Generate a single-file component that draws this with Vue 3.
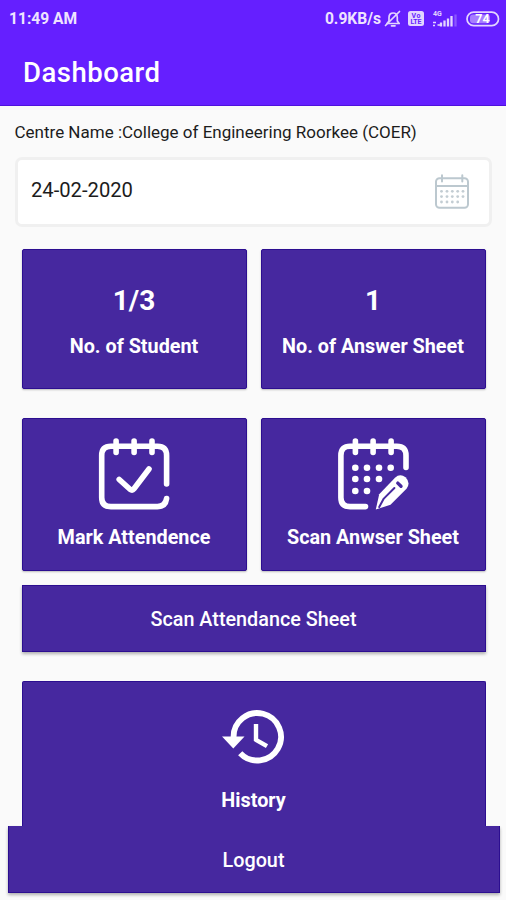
<template>
  <div class="screen">
    <header class="header">
      <div class="status">
        <span class="status__time">11:49 AM</span>
        <span class="status__speed">0.9KB/s</span>
        <svg class="status__bell" width="18" height="18" viewBox="0 0 18 18">
          <path d="M3 13.5 L5 11 V7.5 C5 4.5 7 3 9.2 3 C11.5 3 13.3 4.5 13.3 7.5 V11 L15.2 13.5 Z M7.5 15.8 H11" />
          <path d="M1.5 15.5 L15.5 1.5" />
        </svg>
        <svg class="status__volte" width="16" height="15" viewBox="0 0 16 15">
          <rect width="16" height="15" rx="2.5" />
          <text x="8" y="7" textLength="9">Vo</text>
          <text x="8" y="13.3" textLength="11">LTE</text>
        </svg>
        <svg class="status__signal" width="26" height="18" viewBox="0 0 26 18">
          <text x="1" y="6">4G</text>
          <path d="M1 12.5 h3 M1 15.5 h2 M5.5 15 h2.5" class="faint" />
          <path d="M9 16.5 v-4 M12.5 16.5 v-6 M16 16.5 v-8 M19.5 16.5 v-10.5" />
          <path d="M23.5 16.5 v-12" class="dim" />
        </svg>
        <svg class="status__battery" width="34" height="16" viewBox="0 0 34 16">
          <rect x="1" y="1.2" width="31.5" height="13.4" rx="6.7" />
          <rect x="4" y="3.5" width="20" height="8.8" rx="3" class="level" />
          <text x="16.5" y="12.4">74</text>
        </svg>
      </div>
      <h1 class="title">Dashboard</h1>
    </header>

    <p class="centre">Centre Name :College of Engineering Roorkee (COER)</p>

    <div class="date">
      <span>{{ date }}</span>
      <svg width="36" height="36" viewBox="0 0 36 36">
        <rect x="2" y="4.2" width="32" height="29.5" rx="3.5" />
        <path d="M2 12 H34 M8 1.2 V7.5 M28.3 1.2 V7.5" />
        <g class="dots">
          <circle v-for="dot in dateDots" :key="dot.id" :cx="dot.x" :cy="dot.y" r="1.4" />
        </g>
      </svg>
    </div>

    <main class="grid">
      <div v-for="item in counts" :key="item.label" class="card card--count">
        <strong class="card__value">{{ item.value }}</strong>
        <span class="card__label">{{ item.label }}</span>
      </div>

      <button class="card card--action">
        <svg width="72" height="74" viewBox="0 0 72 74">
          <path d="M68.6 46 V17.5 Q68.6 8.3 59.4 8.3 H12.9 Q3.7 8.3 3.7 17.5 V59.4 Q3.7 68.6 12.9 68.6 H59.4 Q67.5 68.6 68.6 60.5" />
          <path d="M18.1 3 V14.5 M36.1 3 V14.5 M54 3 V14.5" />
          <path d="M21.2 41.5 L32 51.3 Q34.3 53 36 50.8 L51 31" />
        </svg>
        <span class="card__label">Mark Attendence</span>
      </button>

      <button class="card card--action">
        <svg width="72" height="74" viewBox="0 0 72 74">
          <path d="M69 29.5 V17.5 Q69 8.3 59.8 8.3 H13.1 Q3.9 8.3 3.9 17.5 V59.4 Q3.9 68.6 13.1 68.6 H28.5" />
          <path d="M18.4 3 V14.5 M36.1 3 V14.5 M54.1 3 V14.5" />
          <g class="solid">
            <circle v-for="dot in sheetDots" :key="dot.id" :cx="dot.x" :cy="dot.y" r="3.3" />
            <path d="M38.8 71.5 L42.2 56.2 L58 39.8 Q63 35.2 68.5 39.3 Q74 44.7 69.5 50.8 L53.5 66.7 Z" />
          </g>
          <path class="cut" d="M42.2 69 L46.8 60.6 L57.4 50" />
          <path class="cut cut--ring" d="M60.8 45.1 L64 48.2" />
        </svg>
        <span class="card__label">Scan Anwser Sheet</span>
      </button>

      <button class="card card--wide">Scan Attendance Sheet</button>

      <button class="card card--history">
        <svg width="64" height="56" viewBox="0 0 64 56">
          <path d="M11.6 29.5 A23.7 23.7 0 1 1 18.2 45.2" />
          <path d="M0 28.5 H22.5 L11.3 40.5 Z" class="head" />
          <path d="M34 16 V31.8 L45 38.2" class="hands" />
        </svg>
        <span class="card__label">History</span>
      </button>
    </main>

    <button class="logout">Logout</button>
  </div>
</template>

<script setup>
import { ref } from 'vue';

const date = ref('24-02-2020');

const counts = [
  { value: '1/3', label: 'No. of Student' },
  { value: '1', label: 'No. of Answer Sheet' }
];

const makeDots = (rows, xs, ys) =>
  rows.flatMap((count, row) =>
    xs.slice(0, count).map((x, col) => ({ id: `${row}-${col}`, x, y: ys[row] }))
  );

const sheetDots = makeDots([4, 3, 2], [18.3, 30, 42, 53.7], [29.7, 41, 53]);
const dateDots = makeDots([5, 5, 4], [7.5, 13, 18.3, 23.7, 29], [17.3, 22.6, 28]);
</script>

<style>
body {
  margin: 0;
  background: #fafafa;
}
</style>

<style scoped>
.screen {
  box-sizing: border-box;
  width: 506px;
  height: 900px;
  overflow: hidden;
  background: #fafafa;
  font-family: Roboto, sans-serif;
}

svg {
  display: block;
  flex: none;
  fill: none;
  stroke-linecap: round;
  stroke-linejoin: round;
}

.header {
  box-sizing: border-box;
  height: 106px;
  background: #651fff;
  border-bottom: 1px solid #4f12dc;
  color: #fff;
}

.status {
  display: flex;
  align-items: center;
  height: 38px;
  padding: 0 6px 0 9px;
  color: #eee3ff;
  font-size: 15.6px;
  font-weight: 700;
}

.status svg {
  margin-bottom: 1px;
  stroke: #e3d4ff;
}

.status text {
  fill: #e3d4ff;
  stroke: none;
  font-weight: 700;
}

.status__speed {
  margin-left: auto;
}

.status__bell {
  margin-left: 3px;
  stroke-width: 1.7;
}

.status__volte {
  margin-left: 6px;
}

.status__volte rect {
  fill: #e3d4ff;
  stroke: none;
}

.status .status__volte text {
  fill: #651fff;
  font-size: 7px;
  text-anchor: middle;
}

.status__signal {
  margin-left: 8px;
  stroke-width: 2.3;
  stroke-linecap: butt;
}

.status__signal text {
  font-size: 7px;
}

.status__signal .faint {
  stroke-width: 1.5;
}

.status__signal .dim {
  opacity: 0.3;
}

.status__battery {
  margin-left: 8px;
  stroke-width: 1.7;
}

.status__battery .level {
  fill: #a77dff;
  stroke: none;
}

.status .status__battery text {
  fill: #fff;
  font-size: 12.5px;
  text-anchor: middle;
}

.title {
  margin: 0;
  padding: 18px 0 0 23px;
  font-size: 27.5px;
  font-weight: 500;
  line-height: 34px;
  letter-spacing: 0.5px;
}

.centre {
  margin: 0;
  padding: 16px 0 0 14.5px;
  color: #1c1c1c;
  font-size: 17px;
  line-height: 21px;
  white-space: nowrap;
}

.date {
  box-sizing: border-box;
  display: flex;
  align-items: center;
  justify-content: space-between;
  width: 477px;
  height: 70px;
  margin: 14px 0 0 15px;
  padding: 0 19px 0 13px;
  border: 3px solid #f0f0f0;
  border-radius: 7px;
  background: #fff;
  color: #1c1c1c;
  font-size: 20.2px;
}

.date span {
  padding-bottom: 4px;
}

.date svg {
  stroke: #bcc8cf;
  stroke-width: 2;
}

.date .dots {
  fill: #c3cdd3;
  stroke: none;
}

.grid {
  display: grid;
  grid-template-columns: 225px 225px;
  grid-template-rows: 140px 28.5px 153px 14.5px 67px 29px 145px;
  column-gap: 14px;
  margin: 22px 20px 0 21.5px;
}

.card,
.logout {
  box-sizing: border-box;
  margin: 0;
  padding: 0;
  border: 1px solid #2c0e90;
  background: #46289f;
  box-shadow: 0 1px 2px rgba(0, 0, 0, 0.25);
  color: #fff;
  font-family: inherit;
  font-size: 19.8px;
  font-weight: 500;
}

.card {
  display: flex;
  flex-direction: column;
  align-items: center;
  border-radius: 2px;
}

.card--count {
  grid-row: 1;
}

.card--action {
  grid-row: 3;
}

.card__value {
  margin-top: 34px;
  font-size: 28px;
  font-weight: 700;
  line-height: 34px;
}

.card__label {
  font-weight: 700;
  line-height: 24px;
  white-space: nowrap;
}

.card--count .card__label {
  margin-top: 17px;
}

.card--action svg {
  margin-top: 19.5px;
  stroke: #fff;
  stroke-width: 5.6;
}

.card--action .card__label {
  margin-top: 14px;
}

.card--action .solid {
  fill: #fff;
  stroke: none;
}

.card--action .cut {
  stroke: #46289f;
  stroke-width: 2;
}

.card--action .cut--ring {
  stroke-width: 3.4;
}

.card--wide {
  grid-row: 5;
  grid-column: 1 / 3;
  justify-content: center;
  padding-top: 2px;
  border-radius: 0;
  box-shadow: 0 2px 3px rgba(0, 0, 0, 0.3);
}

.card--history {
  grid-row: 7;
  grid-column: 1 / 3;
  border-bottom: 0;
  border-radius: 2px 2px 0 0;
  box-shadow: none;
}

.card--history svg {
  margin-top: 26px;
  stroke: #fff;
  stroke-width: 5.8;
  stroke-linecap: butt;
  stroke-linejoin: miter;
}

.card--history .head {
  fill: #fff;
  stroke: none;
}

.card--history .hands {
  stroke-width: 4.4;
}

.card--history .card__label {
  margin-top: 25px;
}

.logout {
  display: block;
  width: 492px;
  height: 67px;
  margin-left: 7.5px;
  padding-top: 3px;
  border-top: 0;
  box-shadow: 0 2px 3px rgba(0, 0, 0, 0.3);
}
</style>
